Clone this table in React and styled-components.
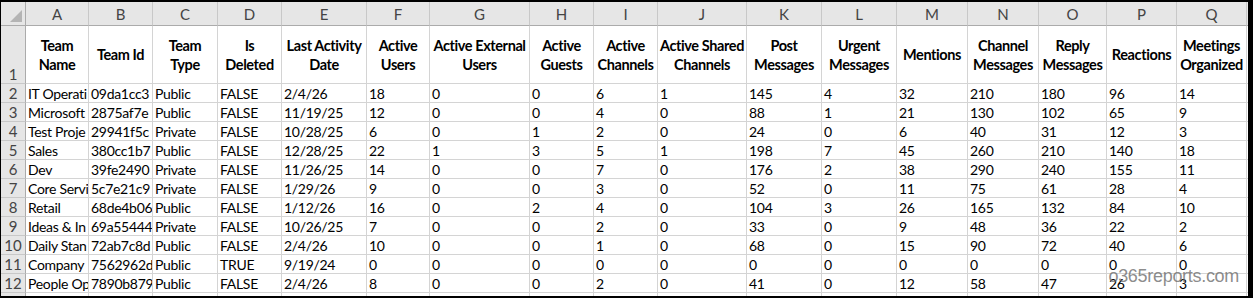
import React from 'react';
import styled, { createGlobalStyle } from 'styled-components';

const GlobalStyle = createGlobalStyle`
  html, body {
    margin: 0;
    padding: 0;
    background: #000;
  }
  body {
    width: 1253px;
    height: 298px;
    overflow: hidden;
  }
`;

const COLS = [
  { key: 'A', width: 63 },
  { key: 'B', width: 64 },
  { key: 'C', width: 65 },
  { key: 'D', width: 64 },
  { key: 'E', width: 85 },
  { key: 'F', width: 63 },
  { key: 'G', width: 100 },
  { key: 'H', width: 64 },
  { key: 'I', width: 64 },
  { key: 'J', width: 89 },
  { key: 'K', width: 75 },
  { key: 'L', width: 75 },
  { key: 'M', width: 71 },
  { key: 'N', width: 71 },
  { key: 'O', width: 68 },
  { key: 'P', width: 70 },
  { key: 'Q', width: 70 },
];

// header titles, as Excel wraps them in row 1
const HEADERS = [
  ['Team', 'Name'],
  ['Team Id'],
  ['Team', 'Type'],
  ['Is', 'Deleted'],
  ['Last Activity', 'Date'],
  ['Active', 'Users'],
  ['Active External', 'Users'],
  ['Active', 'Guests'],
  ['Active', 'Channels'],
  ['Active Shared', 'Channels'],
  ['Post', 'Messages'],
  ['Urgent', 'Messages'],
  ['Mentions'],
  ['Channel', 'Messages'],
  ['Reply', 'Messages'],
  ['Reactions'],
  ['Meetings', 'Organized'],
];

const ROWS = [
  ['IT Operati', '09da1cc3', 'Public', 'FALSE', '2/4/26', '18', '0', '0', '6', '1', '145', '4', '32', '210', '180', '96', '14'],
  ['Microsoft', '2875af7e', 'Public', 'FALSE', '11/19/25', '12', '0', '0', '4', '0', '88', '1', '21', '130', '102', '65', '9'],
  ['Test Proje', '29941f5c', 'Private', 'FALSE', '10/28/25', '6', '0', '1', '2', '0', '24', '0', '6', '40', '31', '12', '3'],
  ['Sales', '380cc1b7', 'Public', 'FALSE', '12/28/25', '22', '1', '3', '5', '1', '198', '7', '45', '260', '210', '140', '18'],
  ['Dev', '39fe2490', 'Private', 'FALSE', '11/26/25', '14', '0', '0', '7', '0', '176', '2', '38', '290', '240', '155', '11'],
  ['Core Servi', '5c7e21c9', 'Private', 'FALSE', '1/29/26', '9', '0', '0', '3', '0', '52', '0', '11', '75', '61', '28', '4'],
  ['Retail', '68de4b06', 'Public', 'FALSE', '1/12/26', '16', '0', '2', '4', '0', '104', '3', '26', '165', '132', '84', '10'],
  ['Ideas & In', '69a55444', 'Private', 'FALSE', '10/26/25', '7', '0', '0', '2', '0', '33', '0', '9', '48', '36', '22', '2'],
  ['Daily Stan', '72ab7c8d', 'Public', 'FALSE', '2/4/26', '10', '0', '0', '1', '0', '68', '0', '15', '90', '72', '40', '6'],
  ['Company', '7562962d', 'Public', 'TRUE', '9/19/24', '0', '0', '0', '0', '0', '0', '0', '0', '0', '0', '0', '0'],
  ['People Op', '7890b879', 'Public', 'FALSE', '2/4/26', '8', '0', '0', '2', '0', '41', '0', '12', '58', '47', '26', '3'],
];

const Frame = styled.div`
  position: relative;
  margin: 2px 5px 0 1px;
  height: 294px;
  overflow: hidden;
  background: #fff;
`;

const Sheet = styled.div`
  display: grid;
  grid-template-columns: 25px ${COLS.map((c) => `${c.width}px`).join(' ')} 1fr;
  grid-template-rows: 24px 58px repeat(12, 19px);
  font-family: Lato, 'Liberation Sans', sans-serif;
  font-size: 14px;
  letter-spacing: -0.3px;
  color: #000;
`;

const Corner = styled.div`
  position: relative;
  background: #e6e6e6;
  border-right: 1px solid #ababab;
  border-bottom: 1px solid #ababab;
  &::after {
    content: '';
    position: absolute;
    right: 3px;
    bottom: 3px;
    width: 0;
    height: 0;
    border-left: 12px solid transparent;
    border-bottom: 12px solid #b4b4b4;
  }
`;

const ColHead = styled.div`
  display: flex;
  align-items: center;
  justify-content: center;
  background: #e6e6e6;
  border-right: 1px solid #c8c8c8;
  border-bottom: 1px solid #ababab;
  color: #444;
  font-size: 15px;
  letter-spacing: 0;
`;

const RowHead = styled.div`
  display: flex;
  align-items: ${({ $bottom }) => ($bottom ? 'flex-end' : 'center')};
  justify-content: center;
  background: #e6e6e6;
  border-right: 1px solid #ababab;
  border-bottom: 1px solid #c8c8c8;
  color: #444;
  font-size: 15px;
  line-height: 18px;
  letter-spacing: 0;
`;

const HeadCell = styled.div`
  display: flex;
  flex-direction: column;
  align-items: center;
  justify-content: center;
  border-right: 1px solid #d4d4d4;
  border-bottom: 1px solid #d4d4d4;
  font-size: 14.5px;
  font-weight: 700;
  line-height: 19px;
  letter-spacing: -0.4px;
  overflow: hidden;
`;

const HeadLine = styled.span`
  white-space: nowrap;
`;

const Cell = styled.div`
  border-right: 1px solid #d4d4d4;
  border-bottom: 1px solid #d4d4d4;
  padding-left: 2px;
  line-height: 19px;
  white-space: nowrap;
  overflow: hidden;
`;

const Watermark = styled.div`
  position: absolute;
  right: 9px;
  bottom: 9px;
  font-family: 'Liberation Sans', Arial, sans-serif;
  font-size: 18px;
  color: rgba(110, 110, 110, 0.8);
  letter-spacing: -0.3px;
`;

const App = () => (
  <>
    <GlobalStyle />
    <Frame>
      <Sheet>
        <Corner />
        {COLS.map((c) => (
          <ColHead key={c.key}>{c.key}</ColHead>
        ))}
        <ColHead />

        <RowHead $bottom>1</RowHead>
        {HEADERS.map((lines) => (
          <HeadCell key={lines.join(' ')}>
            {lines.map((l) => (
              <HeadLine key={l}>{l}</HeadLine>
            ))}
          </HeadCell>
        ))}
        <Cell />

        {ROWS.map((row, i) => (
          <React.Fragment key={row[1]}>
            <RowHead>{i + 2}</RowHead>
            {row.map((v, j) => (
              <Cell key={j}>{v}</Cell>
            ))}
            <Cell />
          </React.Fragment>
        ))}

        <RowHead />
        {COLS.map((c) => (
          <Cell key={c.key} />
        ))}
        <Cell />
      </Sheet>
      <Watermark>o365reports.com</Watermark>
    </Frame>
  </>
);

export default App;
